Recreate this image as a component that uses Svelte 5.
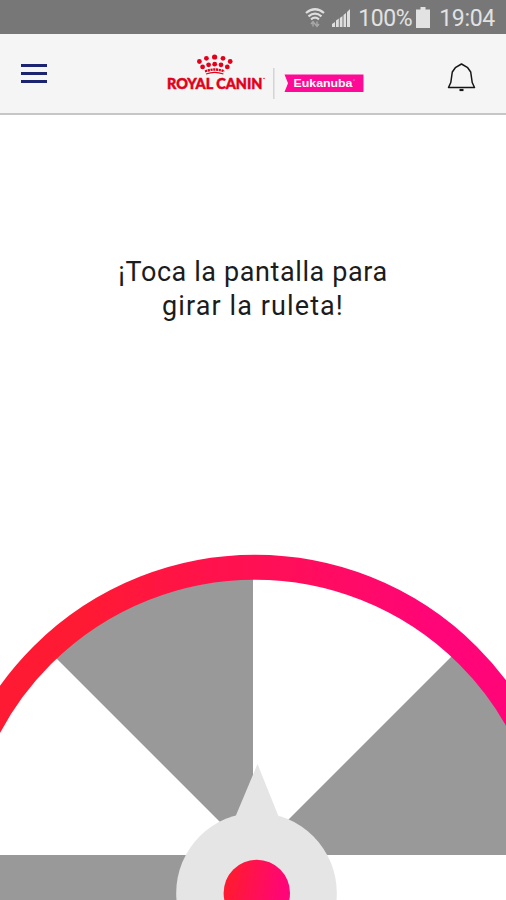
<script lang="ts">
  let { time = '19:04', battery = 100 }: { time?: string, battery?: number } = $props();

  const center = { x: 253, y: 855 };
  const radius = 400;

  // dark wedges, start angle in degrees (each one spans 45)
  const wedges = [-135, -45, 135];

  // crown pearls: x, y, radius
  const pearls = [
    [199.4, 61.5, 2.4],
    [206.4, 58.3, 2.4],
    [214.6, 57, 2.6],
    [223, 58.3, 2.4],
    [230.2, 61.5, 2.4],
    [202.6, 66.9, 2.4],
    [208.6, 64.8, 2.4],
    [214.7, 64.2, 2.4],
    [221, 64.8, 2.4],
    [227.3, 66.9, 2.4]
  ];

  function point(deg: number) {
    const a = (deg * Math.PI) / 180;
    return `${center.x + radius * Math.cos(a)} ${center.y + radius * Math.sin(a)}`;
  }

  function wedge(deg: number) {
    return `M${center.x} ${center.y}L${point(deg)}A${radius} ${radius} 0 0 1 ${point(deg + 45)}Z`;
  }
</script>

<div class="screen">
  <div class="status">
    <svg class="wifi" width="20" height="20" viewBox="0 0 20 20">
      <g fill="none" stroke="#dedede" stroke-width="2.200">
        <path d="M1 5Q10 -2.500 19 5" />
        <path d="M3.500 8.300Q10 2.800 16.500 8.300" />
        <path d="M6 11.300Q10 8.100 14 11.300" />
      </g>
      <path d="M8 18.500v-5M6 16l2-2.500 2 2.500M12 13.500v5M10 16l2 2.500 2-2.500" fill="none" stroke="#a8a8a8" stroke-width="1.400" />
    </svg>
    <svg class="signal" width="18" height="18" viewBox="0 0 18 18" fill="#dedede">
      <path d="M0 18v-3l3-2v5zM4 18v-6.500l2.800-2V18zM7.800 18V9l2.700-2v11zM11.500 18V6l2.500-2v14zM15 18V3l3-3v18z" />
    </svg>
    <span class="battery-text">{battery}%</span>
    <svg class="battery" width="14" height="21" viewBox="0 0 14 21" fill="#e2e2e2">
      <path d="M4.500 0h5v2.500H14V21H0V2.500h4.500z" />
    </svg>
    <span class="time">{time}</span>
  </div>

  <header>
    <button class="menu" aria-label="Menú">
      <span></span>
      <span></span>
      <span></span>
    </button>
    <svg class="brand" width="204" height="50" viewBox="164 50 204 50">
      <g fill="#e2001a">
        {#each pearls as [x, y, r]}
          <circle cx={x} cy={y} {r} />
        {/each}
        <path d="M205 71.500Q214.700 67.500 224.400 71.500" fill="none" stroke="#e2001a" stroke-width="2.400" stroke-dasharray="2.200 .6" />
        <path d="M206 74Q214.700 70.800 223.400 74" fill="none" stroke="#e2001a" stroke-width="1.200" />
        <text class="royal" x="167" y="89.300" textLength="95.500" lengthAdjust="spacingAndGlyphs">ROYAL CANIN</text>
        <circle cx="264" cy="78.500" r=".7" />
      </g>
      <path d="M273.800 68v31" stroke="#cfcfcf" stroke-width="1.300" />
      <path d="M284.500 74.500h79v17.500h-79l3.500-8.700z" fill="#ff0a96" />
      <text class="eukanuba" x="293.500" y="87" textLength="59" lengthAdjust="spacingAndGlyphs">Eukanuba</text>
      <circle cx="354" cy="80" r=".6" fill="#fff" />
    </svg>
    <svg class="bell" width="30" height="32" viewBox="446 62 30 32" fill="none" stroke="#161616">
      <path d="M448.500 87.500l2.300-5 1.500-10.500 3-4.300 6.200-3.700 6.200 3.700 3 4.300 1.500 10.500 2.300 5z" stroke-width="1.500" stroke-linejoin="round" />
      <path d="M459.500 90h4" stroke-width="2.200" />
    </svg>
  </header>

  <main>
    <p>
      <span class="first">¡Toca la pantalla para</span><br />
      <span class="second">girar la ruleta!</span>
    </p>
    <svg class="wheel" width="506" height="360" viewBox="0 540 506 360">
      <defs>
        <linearGradient id="rim" gradientUnits="userSpaceOnUse" x1="80" y1="650" x2="430" y2="680">
          <stop offset="0" stop-color="#ff1a33" />
          <stop offset="1" stop-color="#ff0578" />
        </linearGradient>
        <linearGradient id="hub" x1="0" y1=".4" x2="1" y2=".6">
          <stop offset=".08" stop-color="#ff1a33" />
          <stop offset=".9" stop-color="#ff0578" />
        </linearGradient>
        <clipPath id="disc">
          <circle cx="255" cy="868.500" r="290" />
        </clipPath>
      </defs>
      <g clip-path="url(#disc)" fill="#999">
        {#each wedges as start}
          <path d={wedge(start)} />
        {/each}
      </g>
      <circle cx="255" cy="868.500" r="301.200" fill="none" stroke="url(#rim)" stroke-width="25" />
      <circle cx="256.500" cy="893" r="80.300" fill="#e5e5e5" />
      <path d="M257.500 764l22.500 56h-46z" fill="#e5e5e5" />
      <circle cx="256.800" cy="893" r="33.200" fill="url(#hub)" />
    </svg>
  </main>
</div>

<style>
  :global(body) {
    margin: 0;
    background: #fff;
  }

  .screen {
    display: flex;
    flex-direction: column;
    width: 506px;
    height: 900px;
    overflow: hidden;
    background: #fff;
    font-family: Roboto, "Liberation Sans", sans-serif;
  }

  .status {
    display: flex;
    align-items: center;
    justify-content: flex-end;
    box-sizing: border-box;
    height: 34px;
    padding: 2px 11px 0 0;
    background: #777;
    color: #e2e2e2;
    font-size: 23px;
  }

  .signal {
    margin: 0 8px 0 7px;
  }

  .battery {
    margin: 0 9px 2px 4px;
  }

  .battery-text {
    letter-spacing: -0.4px;
  }

  .time {
    letter-spacing: -0.3px;
  }

  header {
    display: flex;
    align-items: center;
    justify-content: space-between;
    box-sizing: border-box;
    height: 81px;
    padding: 0 30px 2px 21px;
    background: #f5f5f5;
    border-bottom: 2px solid #c6c6c6;
  }

  .menu {
    display: flex;
    flex-direction: column;
    gap: 5px;
    width: 26px;
    padding: 1px 0 0;
    border: none;
    background: none;
  }

  .menu span {
    height: 3px;
    background: #1c2370;
  }

  .brand {
    margin: 5px 0 0 38px;
  }

  .bell {
    margin-top: 11px;
  }

  .royal {
    font: 900 15px Lato, sans-serif;
    stroke: #e2001a;
    stroke-width: 0.5px;
  }

  .eukanuba {
    font: bold 11px "Liberation Sans", sans-serif;
    fill: #fff;
  }

  main {
    display: flex;
    flex-direction: column;
    justify-content: space-between;
    flex: 1;
  }

  p {
    margin: 140px 0 0;
    text-align: center;
    color: #1c1c1c;
    font-size: 27px;
    line-height: 34px;
  }

  .first {
    letter-spacing: 0.6px;
  }

  .second {
    letter-spacing: 1.1px;
  }

  .wheel {
    display: block;
  }
</style>
